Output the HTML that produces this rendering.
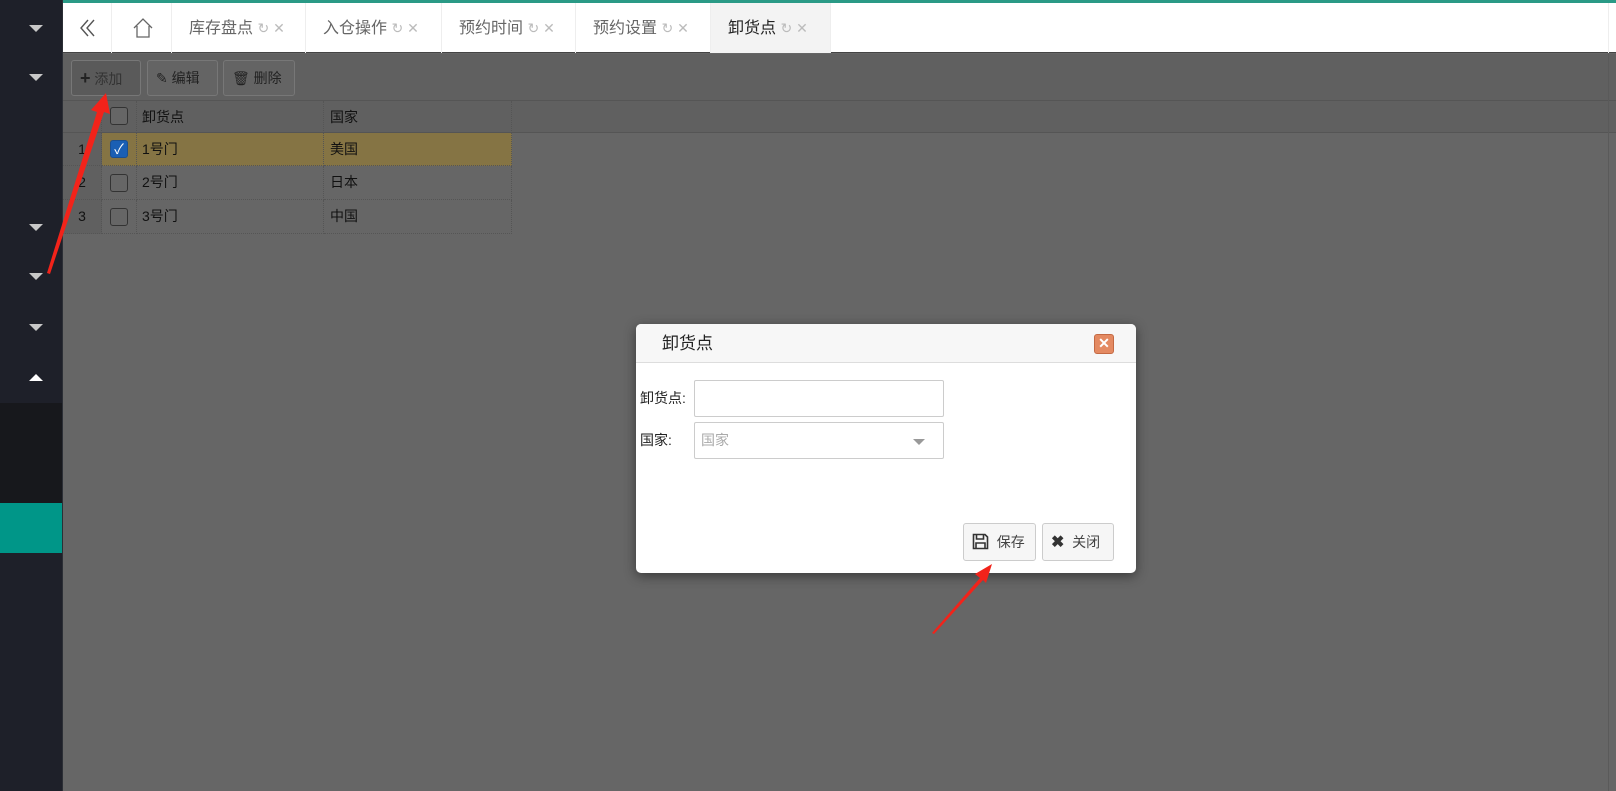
<!DOCTYPE html>
<html><head><meta charset="utf-8"><style>
*{box-sizing:border-box;margin:0;padding:0}
body{width:1616px;height:791px;overflow:hidden;position:relative;background:#666;font-family:"Liberation Sans","Noto Sans CJK SC",sans-serif;font-size:14px;color:#222}
.a{position:absolute}
.side{left:0;top:0;width:63px;height:791px;background:#1e2029;border-right:1px solid #2c2f36}
.tri{position:absolute;left:29px;width:0;height:0;border-left:7px solid transparent;border-right:7px solid transparent}
.dn{border-top:7px solid #c8c8c8}
.up{border-bottom:7px solid #fff}
.topline{left:63px;top:0;width:1553px;height:3px;background:#2a9a86}
.tabs{left:63px;top:3px;width:1553px;height:50px;background:#fff;border-bottom:1px solid #444}
.tab{position:absolute;top:0;height:50px;border-right:1px solid #eee;line-height:50px;font-size:16px;color:#666}
.ic{color:#bbb;font-size:14px}
.btn{position:absolute;top:60px;height:36px;border:1px solid #777;border-radius:3px;background:#646464;color:#222;line-height:34px;font-size:14px}
.cell{position:absolute;border-right:1px dotted #555;border-bottom:1px dotted #555;line-height:33px;font-size:14px;color:#111}
.cb{position:absolute;left:110px;width:18px;height:18px;border:1px solid #333;border-radius:3px;background:#666}
.dlg{left:636px;top:324px;width:500px;height:249px;background:#fff;border-radius:5px;box-shadow:0 3px 12px rgba(0,0,0,.45);overflow:hidden}
.dbtn{position:absolute;top:199px;height:38px;border:1px solid #ccc;border-radius:3px;background:#f6f6f6;line-height:36px;font-size:14px;color:#444}
</style></head><body>
<div class="a side">
<div class="tri dn" style="top:25px"></div>
<div class="tri dn" style="top:74px"></div>
<div class="tri dn" style="top:224px"></div>
<div class="tri dn" style="top:273px"></div>
<div class="tri dn" style="top:324px"></div>
<div class="tri up" style="top:374px"></div>
<div class="a" style="left:0;top:403px;width:62px;height:100px;background:#17181c"></div>
<div class="a" style="left:0;top:503px;width:62px;height:50px;background:#009688"></div>
</div>
<div class="a topline"></div>
<div class="a tabs">
<div class="tab" style="left:0;width:49px"><svg class="a" style="left:15px;top:15px" width="20" height="20" viewBox="0 0 20 20"><path d="M10 2 L3 10 L10 18 M16 2 L9 10 L16 18" fill="none" stroke="#555" stroke-width="1.4"/></svg></div>
<div class="tab" style="left:49px;width:60px"><svg class="a" style="left:20px;top:14px" width="22" height="22" viewBox="0 0 22 22"><path d="M2 11 L11 2 L20 11 M5 9 V20 H17 V9" fill="none" stroke="#666" stroke-width="1.3"/></svg></div>
<div class="tab" style="left:109px;width:134px;padding-left:17px">库存盘点 <span class="ic">↻ ✕</span></div>
<div class="tab" style="left:243px;width:136px;padding-left:17px">入仓操作 <span class="ic">↻ ✕</span></div>
<div class="tab" style="left:379px;width:134px;padding-left:17px">预约时间 <span class="ic">↻ ✕</span></div>
<div class="tab" style="left:513px;width:135px;padding-left:17px">预约设置 <span class="ic">↻ ✕</span></div>
<div class="tab" style="left:648px;width:120px;padding-left:17px;background:#f3f3f3;color:#222">卸货点 <span class="ic">↻ ✕</span></div>
<div class="a" style="left:1545px;top:0;width:1px;height:50px;background:#eee"></div>
</div>
<div class="a" style="left:63px;top:54px;width:1553px;height:47px;background:#606060;border-bottom:1px solid #555"></div>
<div class="btn" style="left:71px;width:70px;background:#5a5a5a;padding-left:8px"><b style="font-size:18px">+</b> <span style="color:#333">添加</span></div>
<div class="btn" style="left:147px;width:71px;padding-left:8px">✎ 编辑</div>
<div class="btn" style="left:223px;width:72px;padding-left:8px">🗑 删除</div>
<div class="a" style="left:63px;top:101px;width:1553px;height:32px;background:#606060;border-bottom:1px solid #555"></div>
<div class="a" style="left:63px;top:133px;width:39px;height:101px;background:#606060"></div>
<div class="a" style="left:102px;top:133px;width:410px;height:33px;background:#857444"></div>
<div class="cell" style="left:63px;top:101px;width:39px;height:32px"></div>
<div class="cell" style="left:102px;top:101px;width:35px;height:32px"></div>
<div class="cell" style="left:137px;top:101px;width:187px;height:32px;padding-left:5px">卸货点</div>
<div class="cell" style="left:324px;top:101px;width:188px;height:32px;padding-left:6px">国家</div>
<div class="cb" style="top:107px"></div>
<div class="cell" style="left:63px;top:133px;width:39px;height:33px;text-align:center">1</div>
<div class="cell" style="left:102px;top:133px;width:35px;height:33px"></div>
<div class="cell" style="left:137px;top:133px;width:187px;height:33px;padding-left:5px">1号门</div>
<div class="cell" style="left:324px;top:133px;width:188px;height:33px;padding-left:6px">美国</div>
<div class="cb" style="top:140px;background:#1a5fb4;border-color:#1a4f90;color:#fff;font-size:14px;line-height:16px;text-align:center">✓</div>
<div class="cell" style="left:63px;top:166px;width:39px;height:34px;text-align:center">2</div>
<div class="cell" style="left:102px;top:166px;width:35px;height:34px"></div>
<div class="cell" style="left:137px;top:166px;width:187px;height:34px;padding-left:5px">2号门</div>
<div class="cell" style="left:324px;top:166px;width:188px;height:34px;padding-left:6px">日本</div>
<div class="cb" style="top:174px"></div>
<div class="cell" style="left:63px;top:200px;width:39px;height:34px;text-align:center">3</div>
<div class="cell" style="left:102px;top:200px;width:35px;height:34px"></div>
<div class="cell" style="left:137px;top:200px;width:187px;height:34px;padding-left:5px">3号门</div>
<div class="cell" style="left:324px;top:200px;width:188px;height:34px;padding-left:6px">中国</div>
<div class="cb" style="top:208px"></div>
<div class="a" style="left:1608px;top:53px;width:1px;height:738px;background:#5a5a5a"></div>

<div class="a dlg">
<div class="a" style="left:0;top:0;width:500px;height:39px;background:#f7f7f7;border-bottom:1px solid #ddd;padding-left:26px;line-height:39px;font-size:17px;color:#222">卸货点</div>
<div class="a" style="left:458px;top:10px;width:20px;height:20px;background:#e48a62;border:1px solid #c46a44;border-radius:3px;color:#fff;font-weight:bold;text-align:center;line-height:17px;font-size:14px">✕</div>
<div class="a" style="left:4px;top:64px;font-size:14px">卸货点:</div>
<div class="a" style="left:58px;top:56px;width:250px;height:37px;border:1px solid #ccc;border-radius:2px"></div>
<div class="a" style="left:4px;top:106px;font-size:14px">国家:</div>
<div class="a" style="left:58px;top:98px;width:250px;height:37px;border:1px solid #ccc;border-radius:2px;padding-left:6px;line-height:35px;color:#aaa;font-size:14px">国家<div class="a" style="left:218px;top:16px;border-left:6px solid transparent;border-right:6px solid transparent;border-top:6px solid #999"></div></div>
<div class="dbtn" style="left:327px;width:73px;padding-left:8px"><svg style="vertical-align:-3px" width="17" height="17" viewBox="0 0 17 17"><path d="M1.5 1.5H13L15.5 4V15.5H1.5Z M4.5 1.5V6H11.5V1.5 M4 15.5V10H13V15.5" fill="none" stroke="#333" stroke-width="1.6"/></svg>&nbsp; 保存</div>
<div class="dbtn" style="left:406px;width:72px;padding-left:8px"><b style="color:#333;font-size:16px">✖</b>&nbsp; 关闭</div>
</div>

<svg class="a" style="left:0;top:0" width="1616" height="791">
<path d="M47 273 L97 112 L91 110 L106 93 L110 114 L104 112 L50 274 Z" fill="#f2231a"/>
<path d="M932 633 L980 578 L975 574 L992 564 L986 583 L983 580 L934 634 Z" fill="#f2231a"/>
</svg>
</body></html>
